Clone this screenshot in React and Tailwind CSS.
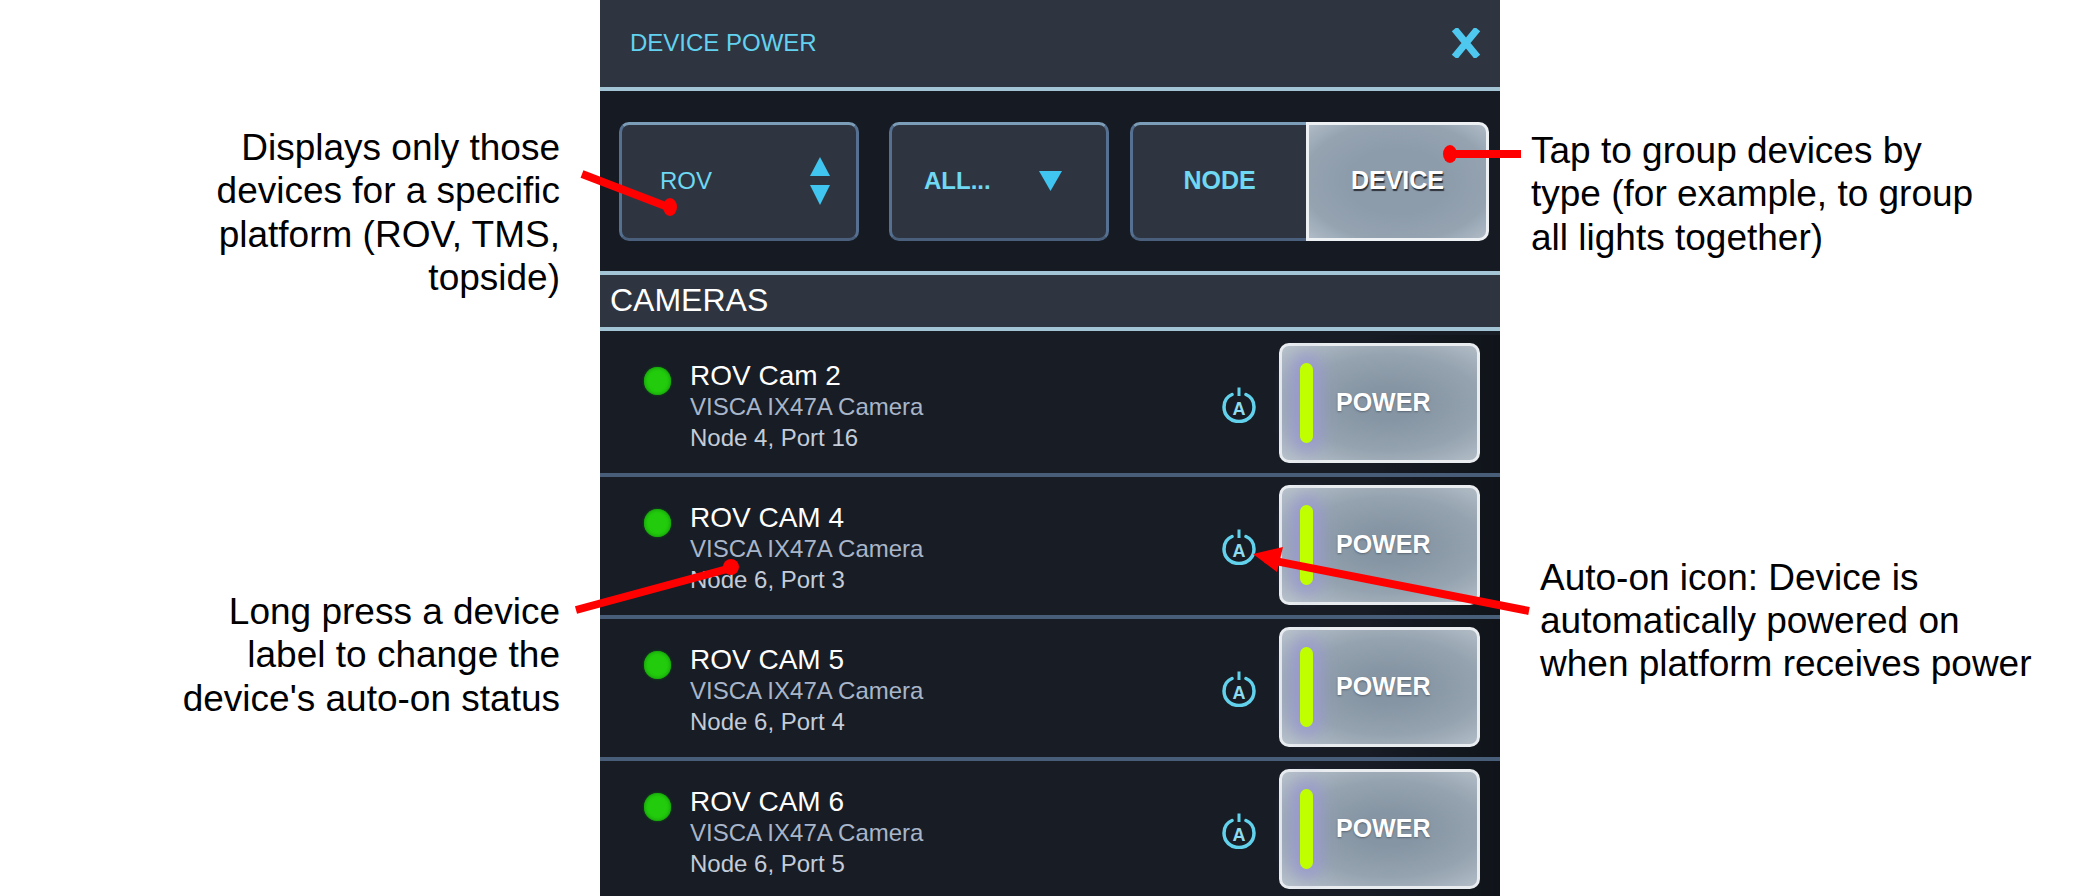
import React from "react";

const FONT = "font-['Liberation_Sans',Arial,sans-serif]";

const devices = [
  { name: "ROV Cam 2", node: "Node 4, Port 16" },
  { name: "ROV CAM 4", node: "Node 6, Port 3" },
  { name: "ROV CAM 5", node: "Node 6, Port 4" },
  { name: "ROV CAM 6", node: "Node 6, Port 5" },
];

// AUTO-ON ICON
const AutoOnIcon = () => (
  <svg width="34" height="36" viewBox="0 0 34 36" fill="none" className="shrink-0 mt-[52px]">
    <path d="M10 7.5 C4 10 2 15 2 20 C2 29 9 34.5 17 34.5 C25 34.5 32 29 32 20 C32 15 30 10 24 7.5" stroke="#62d2ec" strokeWidth="3.5" strokeLinecap="round" />
    <path d="M17 0.5 V9" stroke="#62d2ec" strokeWidth="3" />
    <text x="17" y="28" textAnchor="middle" fontFamily="Liberation Sans" fontWeight="700" fontSize="18" fill="#8fdcf0">A</text>
  </svg>
);

// DEVICE ROW
const DeviceRow = ({ device }) => (
  <div className="flex h-[142px] pl-[44px] pr-[20px] border-b-4 border-[#475d78] bg-[linear-gradient(90deg,#171c25,#171c25_85%,#10141a)]">
    <div className="w-[27px] h-[28px] mt-[32px] rounded-full bg-[#22cc0c] shadow-[inset_0_0_4px_#128a0c,0_0_3px_#0f5a12] shrink-0" />
    <div className="ml-[19px] mt-[26px] flex-1">
      <div className="text-[28px] leading-[30px] text-white">{device.name}</div>
      <div className="text-[24px] leading-[31px] text-[#a9b6c9]">VISCA IX47A Camera</div>
      <div className="text-[24px] leading-[31px] text-[#c3ccd8]">{device.node}</div>
    </div>
    <AutoOnIcon />
    <button className="ml-[23px] mt-2 w-[201px] h-[120px] rounded-[10px] border-[3px] border-[#e9edf0] bg-[radial-gradient(ellipse_at_55%_50%,#8695a3_20%,#95a3b0_60%,#b9c3cc_100%)] flex items-center relative shrink-0">
      <span className="ml-[18px] w-[13px] h-[80px] rounded-full bg-[#c0ff00] shadow-[0_0_16px_8px_#9a9ad0]" />
      <span className="ml-[23px] text-[25px] font-bold text-white [text-shadow:0_1px_2px_#5a6572]">POWER</span>
    </button>
  </div>
);

// CALLOUT ARROWS
const Arrows = () => (
  <svg width="2100" height="896" viewBox="0 0 2100 896" fill="none" className="absolute inset-0 pointer-events-none">
    <path d="M582 174 L668 207" stroke="#ff0000" strokeWidth="8" />
    <ellipse cx="670" cy="207" rx="7" ry="9" fill="#ff0000" />
    <path d="M576 610 L731 568" stroke="#ff0000" strokeWidth="8" />
    <ellipse cx="731" cy="567" rx="8" ry="8" fill="#ff0000" />
    <path d="M1529 611 L1265 559" stroke="#ff0000" strokeWidth="8" />
    <polygon points="1253,554 1283,547 1277,572" fill="#ff0000" />
    <path d="M1452 154 L1521 154" stroke="#ff0000" strokeWidth="8" />
    <ellipse cx="1450" cy="154" rx="7" ry="9" fill="#ff0000" />
  </svg>
);

const selectBox = "h-[119px] pb-[2px] rounded-[10px] border-[3px] border-b-[#4a5f7c] border-l-[#557090] border-r-[#557090] border-t-[#7b9db8] bg-[#2e3540] flex items-center";

export default function App() {
  return (
    <div className={`${FONT} relative flex w-[2100px] h-[896px] overflow-hidden bg-white`}>
      {/* left callouts */}
      <div className="w-[600px] shrink-0 flex flex-col items-end pr-[40px] pt-[126px] text-[37px] leading-[43.3px] text-black text-right">
        <div>Displays only those<br />devices for a specific<br />platform (ROV, TMS,<br />topside)</div>
        <div className="mt-[291px]">Long press a device<br />label to change the<br />device's auto-on status</div>
      </div>

      {/* panel */}
      <div className="w-[900px] shrink-0 bg-[#171c25]">
        <div className="h-[91px] pb-[2px] bg-[#2e3540] border-b-4 border-[#a3c4d4] flex items-center justify-between pl-[30px] pr-[19px]">
          <span className="text-[24px] text-[#62d2f0]">DEVICE POWER</span>
          <svg width="30" height="30" viewBox="0 0 30 30" fill="none">
            <path d="M3.5 1 L26.5 29 M26.5 1 L3.5 29" stroke="#4fc8f0" strokeWidth="7" />
          </svg>
        </div>

        <div className="h-[180px] flex pl-[19px] pt-[31px] bg-[#151a23]">
          <div className={`${selectBox} w-[240px] pl-[38px] pr-[26px] justify-between`}>
            <span className="text-[24px] text-[#6fd8f2]">ROV</span>
            <div className="flex flex-col gap-[9px]">
              <svg width="20" height="19" viewBox="0 0 20 19"><polygon points="10,0 20,19 0,19" fill="#40c4f0" /></svg>
              <svg width="20" height="20" viewBox="0 0 20 20"><polygon points="0,0 20,0 10,20" fill="#40c4f0" /></svg>
            </div>
          </div>
          <div className={`${selectBox} w-[220px] ml-[30px] pl-[32px] pr-[44px] justify-between`}>
            <span className="text-[24px] font-bold text-[#6fd8f2]">ALL...</span>
            <svg width="23" height="20" viewBox="0 0 23 20"><polygon points="0,0 23,0 11.5,20" fill="#40c4f0" /></svg>
          </div>
          <div className="flex w-[359px] h-[119px] ml-[21px]">
            <div className="w-[176px] pb-[2px] rounded-l-[10px] border-[3px] border-r-0 border-b-[#4a5f7c] border-l-[#557090] border-t-[#7b9db8] bg-[#2e3540] flex items-center justify-center text-[25px] font-bold text-[#6fd8f2]">NODE</div>
            <div className="flex-1 pb-[2px] rounded-r-[10px] border-[3px] border-[#eef1f3] bg-[radial-gradient(ellipse_at_center,#8d9cab_40%,#95a3b1_75%,#b0bcc7_100%)] flex items-center justify-center text-[25px] font-bold text-white [text-shadow:1px_2px_1px_#2c3138]">DEVICE</div>
          </div>
        </div>

        <div className="h-[60px] pb-[2px] border-y-4 border-[#a3c4d4] bg-[#2e3540] flex items-center pl-[10px] text-[32px] text-white">CAMERAS</div>

        <div className="pt-[4px]">
          {devices.map((d) => (
            <DeviceRow key={d.name} device={d} />
          ))}
        </div>
      </div>

      {/* right callouts */}
      <div className="flex-1 pl-[31px] pt-[129px] text-[37px] leading-[43.3px] text-black">
        <div>Tap to group devices by<br />type (for example, to group<br />all lights together)</div>
        <div className="mt-[297px] ml-[9px]">Auto-on icon: Device is<br />automatically powered on<br />when platform receives power</div>
      </div>

      <Arrows />
    </div>
  );
}
